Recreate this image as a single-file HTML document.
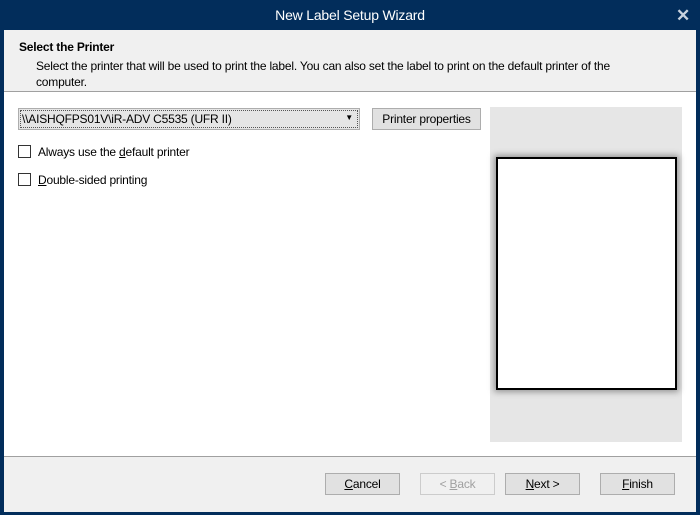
<!DOCTYPE html><html><head><style>
body{margin:0;width:700px;height:515px;background:#022d5b;font-family:"Liberation Sans",sans-serif;font-size:12px;letter-spacing:-0.2px;color:#000;position:relative;overflow:hidden}
.a{position:absolute}
.btn{position:absolute;height:20px;border:1px solid #adadad;background:#e1e1e1;text-align:center;line-height:20px;font-size:12px;box-sizing:border-box}
.cb{position:absolute;left:18px;width:13px;height:13px;border:1px solid #333;background:#fff;box-sizing:border-box}
</style></head><body>
<div class="a" style="left:0;top:0;width:700px;height:30px;color:#fff;font-size:14px;line-height:30px;text-align:center">New Label Setup Wizard</div>
<div class="a" style="right:10px;top:6px;color:#c8d2de;font-size:17px;font-weight:bold">✕</div>
<div class="a" style="left:4px;top:30px;width:692px;height:481px;background:#fff"></div>
<div class="a" style="left:4px;top:30px;width:692px;height:61px;background:#f0f0f0;border-bottom:1px solid #a0a0a0"></div>
<div class="a" style="left:19px;top:40px;font-weight:bold">Select the Printer</div>
<div class="a" style="left:36px;top:58px;width:600px;line-height:16px">Select the printer that will be used to print the label. You can also set the label to print on the default printer of the computer.</div>
<div class="a" style="left:18px;top:108px;width:342px;height:22px;border:1px solid #adadad;background:#e5e5e5;box-sizing:border-box"><div class="a" style="left:1px;top:1px;right:1px;bottom:1px;border:1px dotted #555"></div><span class="a" style="left:3px;top:3px">\\AISHQFPS01V\iR-ADV C5535 (UFR II)</span><span class="a" style="right:6px;top:4px;font-size:8px">▼</span></div>
<div class="btn" style="left:372px;top:108px;width:109px;height:22px;line-height:20px">Printer properties</div>
<div class="cb" style="top:145px"></div><div class="a" style="left:38px;top:145px">Always use the <u>d</u>efault printer</div>
<div class="cb" style="top:173px"></div><div class="a" style="left:38px;top:173px"><u>D</u>ouble-sided printing</div>
<div class="a" style="left:490px;top:107px;width:192px;height:335px;background:#e6e6e6"></div>
<div class="a" style="left:496px;top:157px;width:181px;height:233px;background:#fff;border:2px solid #000;box-sizing:border-box;box-shadow:0 0 6px 2px rgba(0,0,0,.35)"></div>
<div class="a" style="left:4px;top:456px;width:692px;height:55px;background:#f0f0f0;border-top:1px solid #a0a0a0"></div>
<div class="btn" style="left:325px;top:473px;width:75px;height:22px"><u>C</u>ancel</div>
<div class="btn" style="left:420px;top:473px;width:75px;height:22px;color:#a0a0a0;border-color:#ccc;background:#f0f0f0">&lt; <u>B</u>ack</div>
<div class="btn" style="left:505px;top:473px;width:75px;height:22px"><u>N</u>ext &gt;</div>
<div class="btn" style="left:600px;top:473px;width:75px;height:22px"><u>F</u>inish</div>
</body></html>
